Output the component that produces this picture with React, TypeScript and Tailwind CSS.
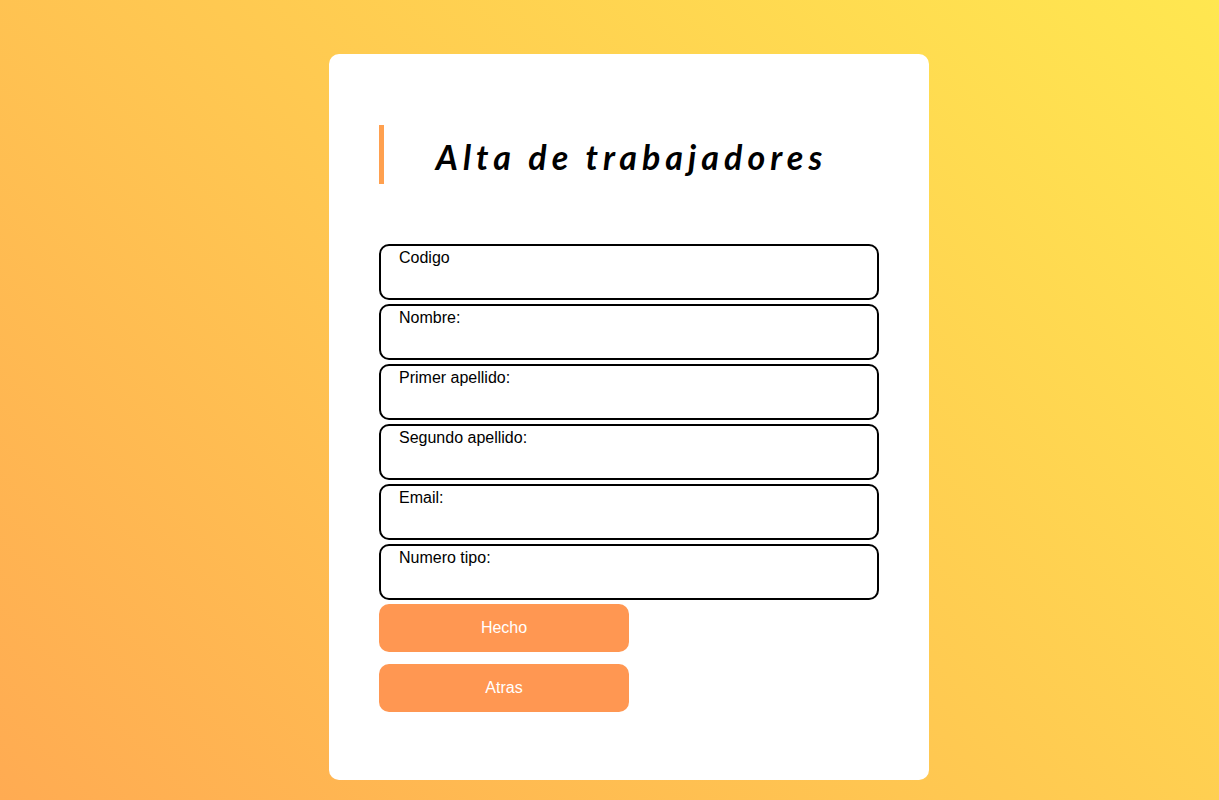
const fields = [
  { id: "codigo", label: "Codigo", type: "text" },
  { id: "nombre", label: "Nombre:", type: "text" },
  { id: "apellido1", label: "Primer apellido:", type: "text" },
  { id: "apellido2", label: "Segundo apellido:", type: "text" },
  { id: "email", label: "Email:", type: "email" },
  { id: "tipo", label: "Numero tipo:", type: "text" },
];

const buttonClass =
  "h-12 w-1/2 cursor-pointer rounded-[10px] bg-[#ff9752] text-base text-white";

export default function App() {
  return (
    <main className="flex min-h-screen items-start justify-center bg-[linear-gradient(45deg,#ffab52,#ffe750)] pt-[54px] pb-5 pl-[39px] font-['Liberation_Sans',Arial,sans-serif] text-base text-black">
      <form
        className="w-full max-w-[600px] rounded-[10px] bg-white px-[50px] pt-[71px] pb-[68px]"
        onSubmit={(e) => e.preventDefault()}
      >
        <h1 className="mb-[60px] border-l-[5px] border-[#ffa04f] pt-1 text-center font-['Lato',sans-serif] text-[34px] leading-[55px] font-bold tracking-[5px] italic">
          Alta de trabajadores
        </h1>
        <div className="flex flex-col gap-1">
          {fields.map((f) => (
            <div
              key={f.id}
              className="flex h-14 flex-col rounded-[10px] border-2 border-black px-[18px]"
            >
              <label htmlFor={f.id} className="leading-6">
                {f.label}
              </label>
              <input
                id={f.id}
                name={f.id}
                type={f.type}
                className="w-full bg-transparent outline-none"
              />
            </div>
          ))}
        </div>
        <div className="mt-1 flex flex-col gap-3">
          <button type="submit" className={buttonClass}>
            Hecho
          </button>
          <button type="button" className={buttonClass}>
            Atras
          </button>
        </div>
      </form>
    </main>
  );
}
